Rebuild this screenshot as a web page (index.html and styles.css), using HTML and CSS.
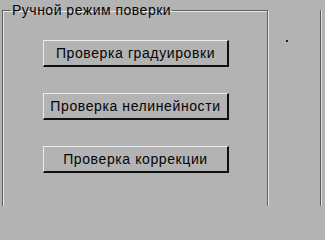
FILE: index.html
```html
<!DOCTYPE html>
<html lang="ru">
<head>
<meta charset="utf-8">
<link rel="stylesheet" href="styles.css">
</head>
<body>
<div class="window">
  <fieldset class="group">
    <legend class="group-title">Ручной режим поверки</legend>
    <div class="buttons">
      <button class="btn" type="button">Проверка градуировки</button>
      <button class="btn" type="button">Проверка нелинейности</button>
      <button class="btn" type="button">Проверка коррекции</button>
    </div>
  </fieldset>
  <div class="side">
    <span class="dot"></span>
  </div>
</div>
</body>
</html>
```

FILE: styles.css
```css
html, body {
  margin: 0;
  padding: 0;
  background: #b3b3b3;
  width: 325px;
  height: 206px;
  overflow: hidden;
}

.window {
  display: flex;
  align-items: flex-start;
  padding-left: 2px;
  font-family: "Liberation Sans", Arial, sans-serif;
  font-size: 14px;
  color: #050505;
}

.group {
  margin: 0;
  padding: 0;
  width: 266px;
  height: 230px;
  border: 1px solid #5e5e5e;
  box-shadow: inset 1px 1px 0 #e8e8e8, 1px 1px 0 #e8e8e8;
  box-sizing: border-box;
  min-width: 0;
}

.group-title {
  margin-left: 8px;
  padding: 0 1px;
  line-height: 20px;
  font-size: 14px;
  letter-spacing: 0.5px;
}

.buttons {
  display: flex;
  flex-direction: column;
  gap: 26px;
  padding-left: 40px;
  padding-top: 20px;
}

.btn {
  width: 186px;
  height: 27px;
  padding: 0;
  background: #b3b3b3;
  border-style: solid;
  border-width: 1px 2px 2px 1px;
  border-color: #ececec #101010 #101010 #ececec;
  font-family: "Liberation Sans", Arial, sans-serif;
  font-size: 14px;
  color: #050505;
  letter-spacing: 0.6px;
}

.side {
  position: relative;
  width: 50px;
  height: 206px;
  margin-left: 2px;
  margin-top: 10px;
  border-right: 1px solid #5a5a5a;
  box-shadow: 1px 0 0 #e0e0e0;
}

.dot {
  position: absolute;
  left: 16px;
  top: 30px;
  width: 2px;
  height: 2px;
  background: #222;
}
```
